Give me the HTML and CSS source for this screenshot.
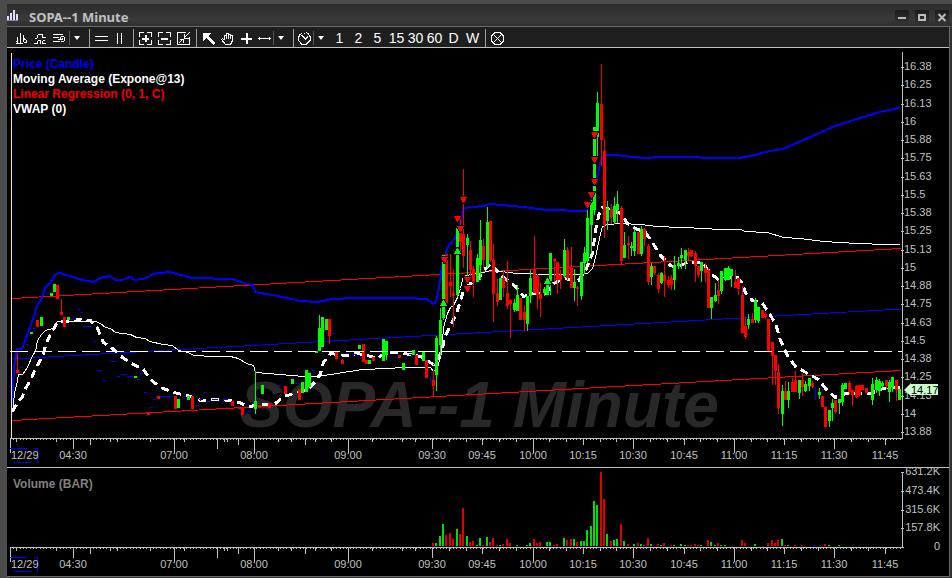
FILE: index.html
```html
<!DOCTYPE html>
<html lang="en">
<head>
    <meta charset="UTF-8">
    <meta name="viewport" content="width=device-width, initial-scale=1.0">
    <title>SOPA--1 Minute</title>
    <link rel="stylesheet" href="styles.css">
</head>
<body>
    <header class="titlebar">
        <svg class="app-icon" viewBox="0 0 11 12" width="11" height="12"><path d="M1 7v4M4 4v7M7 1v10M10 5v6" stroke="#dcdcff" stroke-width="2"/><path d="M0 11.5h11" stroke="#8a80c0"/></svg>
        <h1 class="title">SOPA--1 Minute</h1>
        <div class="window-controls">
            <button class="control" aria-label="Minimize"><svg viewBox="0 0 14 14"><path d="M3 8h8"/></svg></button>
            <button class="control" aria-label="Maximize"><svg viewBox="0 0 14 14"><path d="M4 5h6v5h-6z"/></svg></button>
            <button class="control" aria-label="Close"><svg viewBox="0 0 14 14"><path d="M3.500 4l7 7M10.500 4l-7 7"/></svg></button>
        </div>
    </header>

    <main class="window">
        <nav class="toolbar">
            <div class="tools">
                <button class="tool" aria-label="Chart style"><svg viewBox="0 0 13 13"><path d="M2.500 5v6M5.500 1v10M8.500 3v5M1 9.500h2M1 11.500h7M9.500 6v1M8.500 8v2M11.500 8v2M9 7.500h2M9 10.500h3"/></svg></button>
                <button class="tool" aria-label="Studies"><svg viewBox="0 0 13 13"><path d="M1 6.500h2M3.500 3v3M4 2.500h5M8.500 3v3M9 5.500h3M0 11.500h4M3.500 9v2M4 8.500h3M6.500 9v3M8 11.500h4M8.500 9v2M9 8.500h2"/></svg></button>
                <button class="tool" aria-label="Lines"><svg viewBox="0 0 13 13"><path d="M0 2.500h10M0 5.500h6M0 9.500h7M8 4.500h3M11.500 5v4M7.500 5v2M8 9.500h3M9.500 6v2M5 7.500h4"/></svg></button>
            </div>
            <button class="menu" aria-label="More chart tools"></button>
            <div class="tools">
                <button class="tool" aria-label="Horizontal split"><svg viewBox="0 0 13 13"><path d="M0 4.500h13M0 8.500h13"/></svg></button>
                <button class="tool" aria-label="Vertical split"><svg viewBox="0 0 13 13"><path d="M3.500 1v11M7.500 1v11"/></svg></button>
            </div>
            <div class="tools">
                <button class="tool" aria-label="Zoom in"><svg viewBox="0 0 13 13"><path d="M0 .5h5M8 .5h5M0 12.500h5M8 12.500h5M.5 0v5M.5 8v5M12.500 0v5M12.500 8v5"/><path class="thick" d="M3 6.500h7M6.500 3v7"/></svg></button>
                <button class="tool" aria-label="Zoom out"><svg viewBox="0 0 13 13"><path d="M0 .5h5M8 .5h5M0 12.500h5M8 12.500h5M.5 0v5M.5 8v5M12.500 0v5M12.500 8v5"/><path class="thick" d="M3 6.500h7"/></svg></button>
                <button class="tool" aria-label="Fit"><svg viewBox="0 0 13 13"><path d="M0 .5h9M.5 0v13M0 12.500h13M12.500 5v8M12.500 .5l-5 5M7.500 2v4h4M2 11l4-4M3 7.500h3v3"/></svg></button>
            </div>
            <div class="tools">
                <button class="tool" aria-label="Pointer"><svg viewBox="0 0 13 13"><path class="solid" d="M1 1h8l-3 3 7 7-2 2-7-7-3 3z"/></svg></button>
                <button class="tool" aria-label="Pan"><svg viewBox="0 0 13 13"><path d="M3.500 8v-5h2v4M5.500 3v-2h2v6M7.500 2h2v5M9.500 3.500h2v5l-2 4h-5l-4-5 1-1 2 2"/></svg></button>
                <button class="tool" aria-label="Crosshair"><svg viewBox="0 0 13 13"><path class="thick" d="M1 6.500h11M6.500 1v11"/></svg></button>
                <button class="tool narrow" aria-label="Trend line"><svg viewBox="0 0 13 13"><path d="M0 6.500h13M1.500 5v3M11.500 5v3"/></svg></button>
            </div>
            <button class="menu" aria-label="More drawing tools"></button>
            <div class="tools">
                <button class="tool narrow" aria-label="Interval"><svg viewBox="0 0 13 13"><path d="M4 1.500l-2 1-1.500 3v3l3 3.500h5l3.500-3.500v-4l-2-3-2-1M3 3l4 4M4 3l3 3M7 7.500l3-3M6.500 1v1"/></svg></button>
            </div>
            <button class="menu" aria-label="More intervals"></button>
            <div class="tools intervals">
                <button class="tool">1</button>
                <button class="tool">2</button>
                <button class="tool">5</button>
                <button class="tool">15</button>
                <button class="tool">30</button>
                <button class="tool">60</button>
                <button class="tool">D</button>
                <button class="tool">W</button>
            </div>
            <div class="tools">
                <button class="tool" aria-label="Stop"><svg viewBox="0 0 13 13"><path d="M4 .5h5l3.500 3.500v5l-3.500 3.500h-5l-3.500-3.500v-5zM3 3l7 7M10 3l-7 7"/></svg></button>
            </div>
        </nav>

        <section class="panel">
            <ul class="legend">
                <li class="blue">Price (Candle)</li>
                <li>Moving Average (Expone@13)</li>
                <li class="red">Linear Regression (0, 1, C)</li>
                <li>VWAP (0)</li>
            </ul>
            <svg class="chart" id="price" viewBox="7 48 942 419"></svg>
        </section>
        <section class="panel">
            <ul class="legend volume-legend">
                <li>Volume (BAR)</li>
            </ul>
            <svg class="chart" id="volume" viewBox="7 468 942 108"></svg>
        </section>
    </main>

    <script src="chart.js"></script>
</body>
</html>
```

FILE: styles.css
```css
* {
    box-sizing: border-box;
}
body {
    margin: 0;
    padding: 4px 0 0 7px;
    background: #4b4b4b;
    color: #fff;
    font-family: "Liberation Sans", Arial, sans-serif;
    font-size: 12px;
}
button {
    padding: 0;
    border: none;
    background: none;
    color: inherit;
    font: inherit;
}

/* title bar */
.titlebar {
    display: flex;
    align-items: center;
    height: 22px;
    padding-right: 3px;
    background: linear-gradient(#2c2c2c, #393939 70%, #303030);
}
.title {
    flex: 1;
    margin: 0 0 0 11px;
    padding-top: 4px;
    color: #c0c0c0;
    font: bold 13px/18px "Noto Sans", "Open Sans", sans-serif;
}
.window-controls {
    display: flex;
    gap: 6px;
    padding-top: 4px;
}
.control {
    width: 14px;
    height: 14px;
    background: linear-gradient(#1c1c1c, #333);
}
.control svg {
    display: block;
    fill: none;
    stroke: #bbb;
    stroke-width: 2;
}

/* window */
.window {
    border-top: 1px solid #6b6b6b;
    border-right: 1px solid #6b6b6b;
    border-bottom: 1px solid #6b6b6b;
    box-shadow: 3px 1px 0 #303030;
    margin: 0 2px 1px 0;
    background: #000;
}

/* toolbar */
.toolbar {
    display: flex;
    align-items: center;
    height: 21px;
    padding: 2px 0 0 5px;
    border-bottom: 1px solid #c0c0c0;
    background: #1e1e1e;
}
.tools {
    display: flex;
    align-items: center;
}
.tools + .tools {
    margin-left: 3px;
}
.menu + .tools:not(.intervals) {
    margin-left: 5px;
}
.menu + .intervals {
    margin-left: 2px;
}
.tools + .tools,
.menu + .tools:not(.intervals) {
    height: 18px;
    padding-left: 2px;
    border-left: 1px solid #a0a0a0;
}
.tool {
    display: flex;
    justify-content: center;
    align-items: center;
    width: 19px;
    height: 18px;
}
.tool.narrow {
    width: 17px;
}
.tool svg {
    width: 13px;
    height: 13px;
    fill: none;
    stroke: #fff;
    shape-rendering: crispEdges;
}
.tool .thick {
    stroke-width: 2;
}
.tool .solid {
    fill: #fff;
    stroke: none;
}
.intervals .tool {
    font-size: 14px;
}
.menu {
    display: flex;
    justify-content: center;
    align-items: center;
    width: 15px;
    height: 14px;
    border-left: 1px solid #555;
}
.menu::after {
    content: "";
    border: 3px solid transparent;
    border-top: 4px solid #fff;
    border-bottom: 0;
}

/* charts */
.panel {
    position: relative;
}
.panel + .panel {
    border-top: 1px solid #c0c0c0;
}
.chart {
    display: block;
    width: 100%;
    height: auto;
}
.legend {
    position: absolute;
    top: 9px;
    left: 6px;
    margin: 0;
    padding: 0;
    list-style: none;
    font-weight: bold;
    line-height: 15px;
}
.legend .blue {
    color: #0000f0;
}
.legend .red {
    color: #f00000;
}
.volume-legend {
    color: #808080;
}
.shapes {
    fill: none;
    shape-rendering: crispEdges;
}
.axis {
    stroke: #c0c0c0;
}
.label {
    fill: #c0c0c0;
    font-size: 11px;
}
.middle {
    text-anchor: middle;
}
.end {
    text-anchor: end;
}
.watermark {
    fill: #282828;
    font-size: 64px;
    font-weight: bold;
    font-style: italic;
}
.tag {
    fill: #ccffcc;
}
.tag-label {
    fill: #000;
    font-size: 11px;
}
.yellow-line {
    stroke: #ffff00;
}
.blue-line {
    stroke: #0000ff;
}
.red-line {
    stroke: #ff0000;
}
.white-line {
    stroke: #fff;
}
.band {
    stroke-width: 2;
}
.average {
    stroke-width: 3;
    stroke-dasharray: 8 5;
}
.level {
    stroke-dasharray: 18 6;
}
.r {
    fill: #ff0000;
}
.g {
    fill: #00ff00;
}
.b {
    fill: #0000ff;
}
.mark {
    stroke: #000;
    paint-order: stroke;
    stroke-width: 2;
}
.bars {
    opacity: 0.88;
}
```

FILE: chart.js
```js
// x, high, low, body top, body bottom, colour
const candles = `17 353 373 370 373 r,31 332 334 332 334 g,37 320 327 320 327 r,41 317 326 317 326 g,51 293 296 293 296 g,
54 284 292 284 292 g,57 285 299 285 299 r,61 299 315 312 315 r,64 317 327 317 327 r,68 317 320 317 320 g,
135 376 378 376 378 g,148 412 415 412 415 r,158 396 399 396 399 r,175 396 409 396 409 r,178 399 408 399 408 g,
188 396 400 396 400 g,192 396 409 396 409 r,232 401 406 401 406 r,239 407 409 407 409 r,242 408 415 408 415 r,
255 371 414 401 409 g,259 405 408 405 408 r,262 385 394 385 394 g,269 403 408 403 408 r,285 386 394 386 394 r,
292 379 384 379 384 g,299 389 400 389 400 r,302 382 393 382 393 g,306 370 392 370 392 g,309 373 387 373 387 g,
316 351 353 351 353 g,319 315 351 328 351 g,322 317 347 317 347 g,326 319 330 319 330 g,329 319 344 319 336 r,
336 352 359 352 359 r,342 359 364 360 364 r,359 345 349 345 349 g,363 344 362 344 362 r,366 360 364 360 364 r,
369 360 364 360 364 g,373 357 361 357 361 r,383 339 361 339 361 g,386 341 360 341 355 g,399 355 358 355 358 r,
403 363 370 363 370 g,413 350 355 350 355 g,416 355 365 355 365 r,423 352 361 352 361 g,426 360 378 360 378 r,
433 371 396 380 386 r,436 336 391 338 375 g,440 308 356 320 345 g,443 255 320 255 318 g,446 254 304 254 303 r,
450 254 297 282 286 r,453 269 327 293 296 r,457 228 297 228 295 g,460 215 252 233 242 r,463 169 268 234 256 r,
467 234 277 238 245 g,470 241 280 250 270 r,473 266 297 269 282 r,477 254 282 258 282 g,480 220 280 240 265 g,
483 239 268 246 260 r,487 207 268 222 266 g,490 221 262 221 260 r,493 244 322 260 294 r,497 279 306 293 302 r,
500 278 300 278 300 g,503 270 297 278 288 r,507 261 309 293 306 r,510 299 338 300 304 r,514 299 312 303 310 g,
517 285 311 295 311 g,520 298 320 298 320 r,524 305 331 312 320 r,527 296 331 296 324 g,530 270 303 278 296 g,
534 236 293 270 293 r,537 274 309 276 295 r,540 283 317 294 299 r,544 287 296 289 293 g,547 279 295 282 295 g,
550 253 295 253 281 g,554 258 282 259 261 r,557 262 294 262 280 r,560 270 289 275 280 r,564 239 278 250 276 g,
567 247 280 250 278 r,571 247 288 268 288 r,574 269 301 282 288 g,577 286 306 287 289 r,581 262 300 262 296 g,
584 247 274 253 263 g,587 210 263 218 261 g,591 200 253 202 225 g,594 127 215 127 210 g,597 92 156 103 137 g,
601 64 166 104 140 r,604 139 238 151 225 r,607 201 230 208 221 g,611 204 224 209 217 r,614 197 224 206 222 g,
617 191 223 204 210 g,621 206 264 208 261 r,624 232 258 245 258 g,628 236 259 243 245 r,631 242 256 246 248 g,
634 229 256 232 251 g,638 232 254 232 254 r,641 226 256 229 254 g,644 228 246 229 239 r,648 244 285 246 282 r,
651 263 285 266 277 g,654 266 275 266 273 r,658 273 293 275 289 r,661 272 284 273 283 g,664 256 297 275 281 r,
668 276 288 280 285 r,671 275 290 278 285 r,674 256 290 265 280 g,678 257 269 263 266 g,681 248 269 255 258 g,
685 250 269 250 260 g,688 248 260 252 256 r,691 250 257 250 256 r,695 251 282 253 266 r,698 266 278 266 275 r,
701 262 282 262 271 g,705 263 282 268 273 r,708 268 308 270 308 r,711 297 319 297 308 g,715 283 302 295 301 g,
718 280 304 290 296 r,721 271 294 271 291 g,725 268 281 268 280 g,728 266 280 268 280 g,731 269 287 269 276 g,
735 270 288 282 288 r,738 278 295 278 289 r,742 286 333 295 333 r,745 317 339 326 337 r,748 314 329 319 325 g,
752 313 323 319 323 r,755 298 323 301 320 g,758 307 323 307 321 g,762 310 318 310 318 r,765 312 319 314 317 r,
768 319 351 319 351 r,772 342 385 342 356 r,775 355 385 355 371 r,778 364 414 372 408 r,782 385 426 391 414 g,
785 381 400 391 400 r,788 382 408 391 400 g,792 378 392 382 392 r,795 371 392 380 392 r,799 380 399 380 393 g,
802 373 396 380 387 r,805 381 392 384 391 g,809 378 391 378 386 g,812 381 388 383 387 r,819 388 399 392 395 g,
822 396 407 396 407 r,825 406 427 407 427 r,829 410 427 410 421 g,832 399 421 403 408 g,835 400 414 400 412 r,
839 399 414 399 403 g,842 383 406 385 402 g,845 383 389 383 389 g,849 381 395 383 392 r,852 390 406 390 395 r,
856 385 398 386 397 r,859 385 396 385 395 r,862 385 390 385 390 r,866 388 393 388 393 r,872 378 405 384 400 g,
876 377 393 380 390 g,879 379 396 381 391 g,882 381 387 383 386 g,886 380 389 380 386 r,889 380 402 382 392 g,
892 377 392 377 387 g,896 380 401 380 390 r,899 389 400 389 400 g`;

// unchanged bars: x, y, width
const flats = `20 367 3,26 344 3,33 328 3,46 293 3,70 319 6,77 309 3,80 312 3,83 326 9,93 341 3,97 370 5,103 380 3,110 361 6,
117 376 3,121 374 6,127 376 6,137 379 3,140 373 3,144 392 3,150 407 3,153 399 3,160 396 12,183 396 3,195 405 4,204 392 3,
199 399 4,207 401 3,212 399 6,222 401 3,223 399 5,245 413 3,248 411 3,278 385 3,281 377 3,296 383 3,312 370 3,332 333 3,
346 353 3,352 354 5,378 348 3,393 357 6,405 357 3,409 354 3`;

// x, height, colour
const volumes = `432 3 r,435 3 g,439 10 g,442 22 g,445 11 r,449 13 r,452 7 r,456 17 g,459 12 r,462 38 r,466 10 g,469 4 r,
472 5 r,476 1 g,479 8 g,482 1 r,486 9 g,489 4 r,492 8 r,496 1 r,499 1 g,502 2 r,506 7 r,509 3 r,516 1 g,526 1 g,529 3 g,
533 7 r,536 3 r,539 4 r,546 4 g,549 4 g,553 1 r,556 2 r,563 8 g,566 6 r,570 7 r,573 7 g,576 4 r,580 5 g,583 5 g,586 16 g,
590 20 g,593 45 g,596 41 g,600 74 r,603 47 r,606 12 g,610 5 r,613 6 g,616 7 g,620 22 r,623 5 g,627 2 r,633 2 g,637 3 r,
640 2 g,643 1 r,647 8 r,650 2 g,657 2 r,660 1 g,663 3 r,670 1 r,673 1 g,680 2 g,684 1 g,687 1 r,690 1 r,694 2 r,697 1 r,
700 1 g,707 6 r,710 4 g,714 1 g,717 3 r,720 1 g,724 1 g,741 6 r,744 3 r,754 2 g,767 3 r,771 6 r,774 3 r,777 6 r,781 7 g,
784 1 r,787 1 g,794 1 r,801 1 r,814 1 b,824 2 r,828 1 g,838 1 g`;

const band = "12,412 14,367 17,349 22,349 26,338 32,322 37,306 42,298 45,288 50,283 55,275 59,273 70,276 82,280 94,282 100,278 110,276 115,280 122,280 130,277 135,280 147,278 152,274 170,272 177,274 192,278 233,279 247,284 253,285 255,292 283,297 300,301 317,302 332,299 355,298 407,298 427,299 433,304 436,302 439,287 442,267 447,248 455,238 460,225 463,208 483,206 490,204 523,207 547,210 587,211 590,203 596,183 598,173 602,158 605,155 617,155 632,157 645,158 660,157 740,158 755,155 770,151 783,149 810,137 835,126 860,118 880,112 899,108";
const vwap = "12,412 14,393 17,380 18,374 22,374 27,367 32,355 35,351 37,340 41,334 45,330 52,328 57,321 95,321 100,323 105,327 110,328 115,332 130,334 136,337 145,338 149,341 163,344 172,345 178,350 188,352 193,355 213,356 230,356 238,358 246,363 253,365 255,372 280,374 303,376 317,376 330,374 362,369 387,368 402,367 430,367 433,371 437,367 441,353 443,327 447,313 450,307 453,305 457,297 460,288 463,276 470,274 483,272 490,270 500,271 517,273 547,274 580,274 587,273 592,268 595,257 600,233 602,226 607,224 620,223 640,224 657,226 680,227 707,228 715,229 741,229 744,231 767,232 783,237 800,238 823,241 857,243 885,244 899,244";
const average = "12,411 17,402 22,396 25,388 31,378 35,368 42,356 45,345 49,336 55,325 58,321 68,321 78,319 90,320 97,328 103,342 112,348 122,357 133,364 143,369 150,379 160,387 177,393 190,396 200,400 217,399 230,400 239,402 247,406 257,405 275,403 283,396 297,392 307,389 315,381 320,373 323,362 330,353 345,355 357,353 367,355 377,358 385,352 397,352 410,354 420,356 433,364 437,360 442,348 444,337 450,325 456,313 460,300 463,290 470,283 478,278 485,268 491,263 495,269 503,277 515,286 523,296 533,293 545,293 553,283 563,278 578,280 585,270 592,253 595,230 599,212 602,207 610,209 620,213 627,223 635,228 645,232 652,242 660,255 670,265 677,267 688,261 703,263 710,273 718,279 728,277 737,277 741,282 745,292 752,300 762,303 768,312 775,323 780,340 787,355 795,366 807,373 818,379 825,388 835,397 845,393 870,393 880,389 887,387 900,387";

const downMarks = [[444, 260], [457, 219], [460, 229], [463, 200], [467, 280], [467, 289], [587, 205], [591, 195], [594, 135], [594, 160], [594, 182]];
const upMarks = [[443, 303], [457, 251], [547, 281]];

const times = [[73, "04:30"], [174, "07:00"], [254, "08:00"], [348, "09:00"], [432, "09:30"], [482, "09:45"], [533, "10:00"], [583, "10:15"], [633, "10:30"], [684, "10:45"], [734, "11:00"], [784, "11:15"], [834, "11:30"], [885, "11:45"]];
const prices = ["16.38", "16.25", "16.13", "16", "15.88", "15.75", "15.63", "15.5", "15.38", "15.25", "15.13", "15", "14.88", "14.75", "14.63", "14.5", "14.38", "14.25", "14.13", "14", "13.88"];
const amounts = ["631.2K", "473.4K", "315.6K", "157.8K", "0"];

// tick length -> x positions
const ticks = {
    3: [16, 56, 110, 117, 150, 184, 224, 227, 278, 291, 315, 331, 372, 402, 415, 449, 466, 499, 516, 549, 566, 600, 616, 650, 667, 700, 717, 751, 767, 801, 818, 851, 868],
    6: [90, 238, 305, 482, 583, 684, 784, 885],
    10: [73, 217, 432, 633, 834],
    14: [10, 174, 254, 348, 533, 734]
};

const rows = text => text.split(",").map(row => row.trim().split(" "));
const line = (x1, y1, x2, y2, cls) => `<path class="${cls}" d="M${x1} ${y1}L${x2} ${y2}"/>`;
const rect = (x, y, w, h, cls) => `<rect class="${cls}" x="${x}" y="${y}" width="${w}" height="${h}"/>`;
const label = (x, y, text, cls) => `<text class="${cls}" x="${x}" y="${y}">${text}</text>`;

function timeAxis(y) {
    let d = `M10 ${y + 0.5}H902`;
    for (let x = 13; x < 900; x += 10 / 3) {
        d += `M${Math.round(x) + 0.5} ${y}v2`;
    }
    for (const size in ticks) {
        ticks[size].forEach(x => d += `M${x + 0.5} ${y}v${Number(size) + 1}`);
    }
    const frame = `<path class="blue-line" d="M10 ${y + 10.5}h17M34 ${y + 10.5}h3.5v14M13 ${y + 24.5}h18"/>`;
    const labels = label(11, y + 21, "12/29", "label") + times.map(t => label(t[0], y + 21, t[1], "label middle")).join("");
    return `<g class="shapes"><path class="axis" d="${d}"/>${frame}</g>${labels}`;
}

function drawPrice() {
    let shapes = "";
    shapes += line(12, 298.5, 901, 248.5, "red-line");
    shapes += line(12, 359, 901, 309, "blue-line");
    shapes += line(12, 420.5, 901, 370.5, "red-line");
    shapes += `<polyline class="blue-line band" points="${band}"/>`;
    shapes += `<g transform="translate(0.5 0.5)"><polyline class="white-line" points="${vwap}"/>`;
    shapes += `<polyline class="white-line average" points="${average}"/></g>`;
    rows(flats).forEach(([x, y, w]) => shapes += rect(x, y, w, 1, "b"));
    shapes += rect(430, 376, 1, 7, "b") + rect(815, 387, 1, 13, "b");
    rows(candles).forEach(([x, high, low, top, bottom, color]) => {
        shapes += rect(x, high, 1, low - high, color);
        shapes += rect(x - 1, top, 3, bottom - top, color);
    });
    downMarks.forEach(([x, y]) => shapes += `<path class="r mark" d="M${x - 3} ${y - 3}h7l-3 6h-1z"/>`);
    upMarks.forEach(([x, y]) => shapes += `<path class="g mark" d="M${x - 3} ${y + 3}h7l-3 -6h-1z"/>`);
    shapes += line(10, 351.5, 902, 351.5, "white-line level");
    shapes += line(11.5, 53, 11.5, 438, "yellow-line");

    let scale = "M902.5 52V439";
    let labels = "";
    prices.forEach((price, i) => {
        const y = Math.round(67 + i * 18.25);
        scale += `M901 ${y + 0.5}h3`;
        labels += label(904, y + 3, price, "label");
    });

    document.getElementById("price").innerHTML =
        label(240, 427, "SOPA--1 Minute", "watermark") +
        `<g class="shapes">${shapes}<path class="axis" d="${scale}"/></g>` +
        labels + timeAxis(438) +
        `<path class="tag" d="M904 390l7 -7v1h27v11h-27v1z"/>` + label(911, 394, "14.17", "tag-label");
}

function drawVolume() {
    let bars = "";
    rows(volumes).forEach(([x, h, color]) => bars += rect(x, 546 - h, 2, h, color));

    let scale = "M902.5 472V548";
    let labels = "";
    amounts.forEach((amount, i) => {
        const y = Math.round(472 + i * 18.75);
        scale += `M901 ${y + 0.5}h3`;
        labels += label(940, y + 3, amount, "label end");
    });

    document.getElementById("volume").innerHTML =
        `<g class="shapes"><g class="bars">${bars}</g><path class="axis" d="${scale}"/></g>` + labels + timeAxis(547);
}

drawPrice();
drawVolume();
```
